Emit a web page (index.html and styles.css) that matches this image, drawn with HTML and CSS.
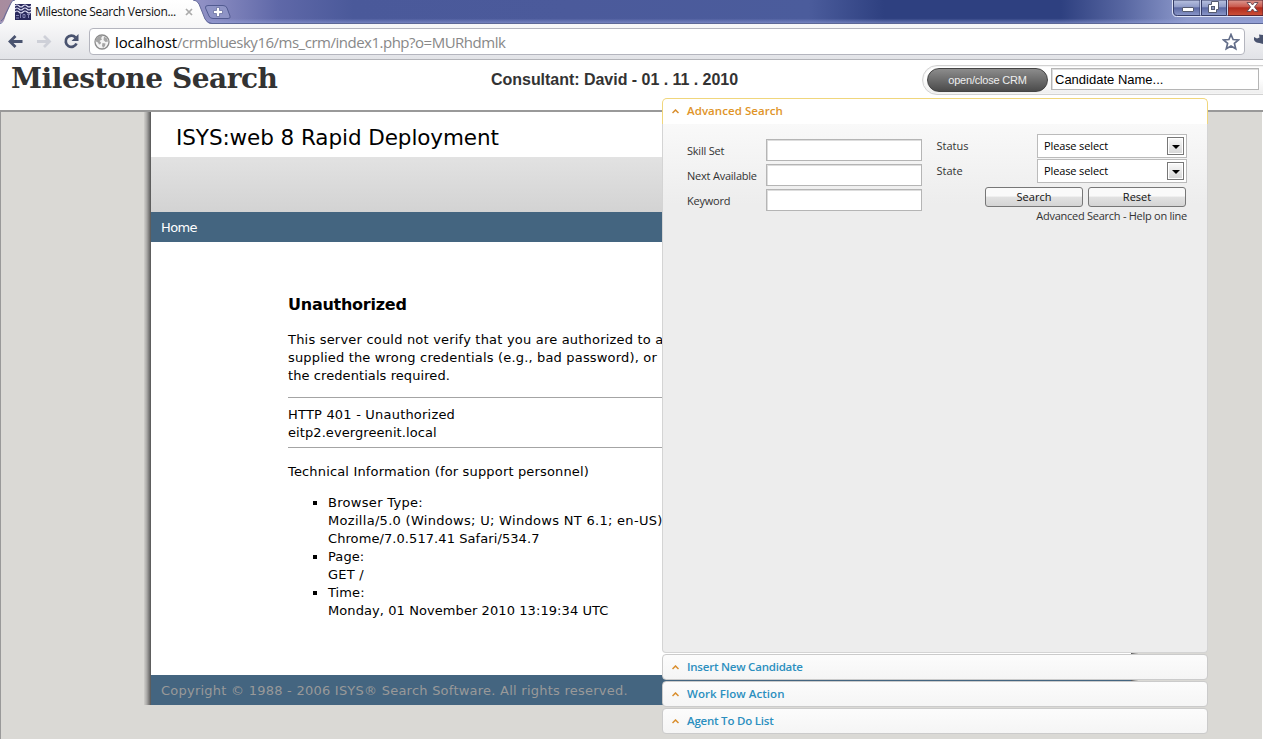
FILE: index.html
```
<!DOCTYPE html>
<html lang="en">
<head>
<meta charset="utf-8">
<title>Milestone Search</title>
<link rel="stylesheet" href="styles.css">
</head>
<body>
<div class="window">
  <div class="titlebar">
    <svg class="tabs" width="240" height="24" viewBox="0 0 240 24">
      <defs><linearGradient id="tab" x1="0" y1="0" x2="0" y2="1"><stop offset="0" stop-color="#fff"/><stop offset="1" stop-color="#f8f8f8"/></linearGradient></defs>
      <path d="M0 24C4 23 4 20 6 15L11 3Q12 0 15 0H193Q197 0 199 4L205 19Q207 24 212 24Z" fill="url(#tab)"/>
      <path d="M1 21C4 19 4 17 6 13L11 3Q12 0 15 0M193 0Q197 0 199 4L205 19Q207 23 212 23.500" fill="none" stroke="#626899" stroke-width="1"/>
      <path d="M205.500 8Q205 5.500 208 5.500H223Q226 5.500 227 8L230 16Q231 18.500 228 18.500H213Q210 18.500 209 16Z" fill="#8f94c6" stroke="#525b91"/>
      <path d="M216.500 7.500h3v3h3v3h-3v3h-3v-3h-3v-3h3z" fill="#fff" stroke="#6870a0" stroke-width=".8"/>
      <rect x="15" y="4" width="16" height="16" fill="#28285c"/>
      <path d="M15 6q2-2 4 0t4 0 4 0 4 0M15 9q2-2 4 0t4 0 4 0 4 0M15 12q2-2 4 0t4 0 4 0 4 0" fill="none" stroke="#dcdcf4" stroke-width="1.100"/>
      <path d="M16 15.500h3M20.500 14v4M23 14.500h2v3h-2zM27 14.500h3M28.500 14v4M16 18h3" fill="none" stroke="#8585b4"/>
      <path d="M186 9l6 6M192 9l-6 6" stroke="#aaa" stroke-width="1.700"/>
    </svg>
    <span class="tab-title">Milestone Search Version...</span>
    <svg class="controls" width="91" height="18" viewBox="0 0 91 18">
      <defs>
        <linearGradient id="btn" x1="0" y1="0" x2="0" y2="1"><stop offset="0" stop-color="#b9c2e0"/><stop offset=".45" stop-color="#8f9bc8"/><stop offset=".5" stop-color="#5b68a2"/><stop offset="1" stop-color="#8b98ca"/></linearGradient>
        <linearGradient id="close" x1="0" y1="0" x2="0" y2="1"><stop offset="0" stop-color="#dc9a92"/><stop offset=".45" stop-color="#c9564a"/><stop offset=".5" stop-color="#b02a1c"/><stop offset="1" stop-color="#cc5038"/></linearGradient>
      </defs>
      <path d="M.5 0v12q0 4.500 4 4.500H91" fill="none" stroke="#dfe4f7"/>
      <path d="M1.500 0v11q0 4.500 4 4.500H28V0z" fill="url(#btn)" stroke="#353c66"/>
      <path d="M29.500 0v15.500h25V0z" fill="url(#btn)" stroke="#353c66"/>
      <path d="M56 0v15.500h35V0z" fill="url(#close)" stroke="#5a2430"/>
      <path d="M28.500 0v15M55.500 0v15" stroke="#cdd4ee"/>
      <rect x="10.500" y="7.500" width="11" height="4" rx=".5" fill="#fff" stroke="#555b70"/>
      <path d="M39.500 1.500h7v8h-2v3h-8v-8h3z" fill="#fff" stroke="#555b70"/>
      <rect x="39.500" y="6.500" width="3" height="3" fill="#8d96bb" stroke="#555b70"/>
      <path d="M75 2.500h3.500l2 2.500 2-2.500H86L82.500 7 86 11.500h-3.500l-2-2.500-2 2.500H75L78.500 7z" fill="#fff" stroke="#62444f" stroke-width=".9"/>
    </svg>
  </div>
  <div class="toolbar">
    <svg class="nav" width="89" height="36" viewBox="0 0 89 36">
      <path d="M22.500 17.500H11M15.500 12l-5.500 5.500 5.500 5.500" fill="none" stroke="#49536f" stroke-width="2.800"/>
      <path d="M37 17.500h11.500M44 12l5.500 5.500-5.500 5.500" fill="none" stroke="#ced0d8" stroke-width="2.800"/>
      <path d="M75.500 13.500A5.600 5.600 0 1 0 76.500 19.500" fill="none" stroke="#49536f" stroke-width="2.700"/>
      <path d="M78.500 10v7h-7z" fill="#49536f"/>
    </svg>
    <div class="omnibox">
      <svg width="16" height="16" viewBox="0 0 16 16">
        <circle cx="8" cy="8" r="7" fill="#f4f4f4" stroke="#8b8b8b" stroke-width="1.300"/>
        <path d="M2 5q2-3 5-3.500l1.500 1L7 4l1 1.500L5.500 7 7 8.500 6.500 10 5 10.500 4 8.500 2 7.500zM10 2.500l3 2 1 3-2.500.5-2-2zM8.500 9l3 .5-.5 2.500-2 2-1-2.500z" fill="#a5a5a5"/>
      </svg>
      <span class="url"><b>localhost</b>/crmbluesky16/ms_crm/index1.php?o=MURhdmlk</span>
      <svg class="star" width="18" height="18" viewBox="0 0 18 18"><path d="M9 1.500l2.100 5 5.400.4-4.100 3.500 1.300 5.300L9 12.900l-4.700 2.800 1.300-5.300L1.500 6.900l5.400-.4z" fill="#fff" stroke="#626d89" stroke-width="1.700"/></svg>
    </div>
    <svg class="wrench" width="9" height="16" viewBox="0 0 9 16"><path d="M0 7l3 1.500L5.500 7.500 5 4.500 9 5v9L5.500 13Q1.500 13 0 10z" fill="#49536f"/></svg>
  </div>
  <header class="header">
    <h1 class="brand">Milestone Search</h1>
    <div class="consultant">Consultant: David - 01 . 11 . 2010</div>
    <div class="crm">
      <button class="toggle">open/close CRM</button>
      <div class="candidate">Candidate Name...</div>
    </div>
  </header>
  <main class="desk">
    <div class="shade"></div>
    <section class="site">
      <h2 class="site-title">ISYS:web 8 Rapid Deployment</h2>
      <div class="band"></div>
      <nav class="menu">Home</nav>
      <article class="error">
        <h3 class="error-title">Unauthorized</h3>
        <p class="para"><span class="wide">This server could not verify that you are authorized to access</span><br><span class="snug">supplied the wrong credentials (e.g., bad password), or</span><br>the credentials required.</p>
        <div class="status"><span class="wide">HTTP 401 - Unauthorized</span><br>eitp2.evergreenit.local</div>
        <p class="tech">Technical Information (for support personnel)</p>
        <ul class="info">
          <li><span class="wider">Browser Type:</span><br><span class="wider">Mozilla/5.0 (Windows; U; Windows NT 6.1; en-US)</span><br>Chrome/7.0.517.41 Safari/534.7</li>
          <li>Page:<br><span class="wide">GET /</span></li>
          <li>Time:<br>Monday, 01 November 2010 13:19:34 UTC</li>
        </ul>
      </article>
      <footer class="footer">Copyright © 1988 - 2006 ISYS® Search Software. All rights reserved.</footer>
    </section>
    <div class="shade shade-right"></div>
  </main>
  <aside class="accordion">
    <div class="tab open"><svg class="caret" width="7" height="5" viewBox="0 0 7 5"><path d="M.5 4L3.500 1l3 3" /></svg><span class="label loose">Advanced Search</span></div>
    <div class="panel">
      <div class="left">
        <label>Skill Set</label><i class="field"></i>
        <label>Next Available</label><i class="field"></i>
        <label>Keyword</label><i class="field"></i>
      </div>
      <div class="right">
        <div class="row"><label>Status</label><div class="select"><span>Please select</span><i class="drop"></i></div></div>
        <div class="row"><label>State</label><div class="select"><span>Please select</span><i class="drop"></i></div></div>
        <div class="buttons"><button class="button">Search</button><button class="button">Reset</button></div>
        <div class="help">Advanced Search - Help on line</div>
      </div>
    </div>
    <div class="tab"><svg class="caret" width="7" height="5" viewBox="0 0 7 5"><path d="M.5 4L3.500 1l3 3" /></svg><span class="label tight">Insert New Candidate</span></div>
    <div class="tab"><svg class="caret" width="7" height="5" viewBox="0 0 7 5"><path d="M.5 4L3.500 1l3 3" /></svg><span class="label loose">Work Flow Action</span></div>
    <div class="tab"><svg class="caret" width="7" height="5" viewBox="0 0 7 5"><path d="M.5 4L3.500 1l3 3" /></svg><span class="label tight">Agent To Do List</span></div>
  </aside>
</div>
</body>
</html>
```
FILE: styles.css
```
* { box-sizing: border-box; }
body { margin: 0; }
h1, h2, h3, p, ul { margin: 0; padding: 0; }
button { padding: 0; }
.window { position: relative; display: flex; flex-direction: column; width: 1263px; height: 739px; overflow: hidden; background: #fff; }

.titlebar { position: relative; display: flex; justify-content: space-between; height: 24px; flex: none; background: linear-gradient(#0000 80%, #98a4de88), linear-gradient(90deg, #a88c9e 0, #8f90c4 16%, #5f68a8 22%, #4a599a 28%, #4b5a9b 45%, #4b5c9c 64%, #2e4080 70%, #2e4080 84%, #5867a2 89%, #8d99cb 94%); border-bottom: 1px solid #5c6796; }
.tabs { flex: none; }
.tab-title { position: absolute; left: 35px; top: 4px; font: 12px/16px "Open Sans", sans-serif; letter-spacing: -.37px; white-space: nowrap; color: #111; }
.controls { flex: none; }
.toolbar { display: flex; height: 36px; flex: none; background: linear-gradient(#f8f8f9, #e2e3e7); border-bottom: 1px solid #b3b4b9; }
.nav { flex: none; }
.omnibox { display: flex; flex: none; align-items: center; width: 1156px; height: 27px; margin-top: 4px; padding: 0 4px 0 4px; border: 1px solid #b4b5be; border-radius: 4px; background: #fff; }
.url { margin-left: 5px; flex: 1; font: 15px/22px "Open Sans", sans-serif; letter-spacing: -.49px; color: #888; white-space: nowrap; }
.url b { font-weight: 400; color: #000; letter-spacing: -.1px; }
.wrench { flex: none; margin: 6px 0 0 9px; }

.header { display: flex; height: 52px; flex: none; background: #fff; border-bottom: 2px solid #999; }
.brand { flex: none; width: 480px; padding-left: 11px; font: bold 28px/37px "DejaVu Serif", serif; letter-spacing: -.45px; color: #333; white-space: nowrap; }
.consultant { flex: none; width: 442px; padding-left: 11px; font: bold 16px/39px "Liberation Sans", Arial, sans-serif; letter-spacing: -.03px; color: #333; white-space: nowrap; }
.crm { display: flex; flex: none; width: 360px; height: 30px; margin-top: 5px; padding: 2px 0 0 4px; border: 1px solid #d2d2d2; border-radius: 15px 0 0 15px; background: linear-gradient(#fff 45%, #eee); box-shadow: inset 0 0 0 1px #f4f4f4; }
.toggle { flex: none; width: 121px; height: 24px; border: 1px solid #444; border-radius: 12px; background: linear-gradient(#8c8c8c, #4b4b4b); color: #eee; font: 11px/20px "Liberation Sans", Arial, sans-serif; letter-spacing: -.2px; }
.candidate { flex: none; width: 208px; height: 22px; margin: 0 0 0 3px; padding-left: 3px; border: 1px solid #b5b5b5; box-shadow: inset 1px 1px 0 #ddd; background: #fff; font: 13px/21px "Liberation Sans", Arial, sans-serif; color: #000; }

.desk { display: flex; flex: 1; align-items: flex-start; background: #dad9d5; border-left: 1px solid #999; border-right: 1px solid #fff; padding-left: 143px; }
.shade { width: 7px; height: 593px; background: linear-gradient(90deg, #d0cfcb, #aaa9a7 40%, #545454); }
.shade-right { transform: scaleX(-1); }
.site { display: flex; flex-direction: column; width: 980px; height: 593px; background: #fff; font-family: "DejaVu Sans", Verdana, sans-serif; color: #000; }
.site-title { height: 45px; padding-left: 25px; font-weight: 400; font-size: 21.5px; line-height: 51px; letter-spacing: -.08px; }
.band { height: 55px; background: linear-gradient(#e2e2e2, #d3d3d3); }
.menu { height: 30px; padding-left: 10px; background: #446580; color: #fff; font-size: 13px; line-height: 31px; letter-spacing: -.6px; }
.error { flex: 1; padding: 53px 0 0 137px; font-size: 13px; line-height: 18px; letter-spacing: .08px; white-space: nowrap; }
.error-title { font-size: 16px; line-height: 20px; letter-spacing: -.25px; }
.wide { letter-spacing: .2px; }
.wider { letter-spacing: .3px; }
.snug { letter-spacing: .17px; }
.para { margin-top: 16px; }
.status { width: 700px; margin-top: 12px; padding: 8px 0 5px; border-top: 1px solid #a4a4a4; border-bottom: 1px solid #a4a4a4; }
.tech { margin-top: 15px; letter-spacing: .16px; }
.info { margin-top: 13px; padding-left: 40px; list-style: square; }
.footer { height: 30px; padding-left: 10px; background: #446580; color: #999; font-size: 13px; line-height: 31px; letter-spacing: .24px; }

.accordion { position: absolute; left: 662px; top: 98px; width: 546px; display: flex; flex-direction: column; font-family: "Open Sans", "Trebuchet MS", sans-serif; }
.tab { display: flex; align-items: center; height: 26px; margin-top: 1px; padding-left: 9px; border: 1px solid #cbcbcb; border-radius: 4px; background: linear-gradient(#fcfcfc, #f5f5f5); color: #2b8fbf; font-size: 11.5px; font-weight: 600; white-space: nowrap; }
.label { padding-bottom: 2px; }
.loose { letter-spacing: .06px; }
.tight { letter-spacing: -.22px; }
.tab.open { margin-top: 0; border-color: #f0d67c; border-bottom: 0; border-radius: 5px 5px 0 0; background: #fff; color: #e09428; }
.caret { flex: none; margin-right: 8px; }
.caret path { fill: none; stroke: #d98e2d; stroke-width: 1.500; }
.panel { display: flex; height: 529px; padding: 10px 20px 0 24px; border: 1px solid #d4d4d4; border-top: 0; border-radius: 0 0 4px 4px; background: linear-gradient(#f9f9f9, #ededed 80px); color: #333; font-size: 11px; }
.left { display: grid; grid-template-columns: 79px 156px; grid-template-rows: repeat(3, 22px); row-gap: 3px; padding-top: 5px; height: 77px; width: 250px; line-height: 24px; letter-spacing: -.22px; white-space: nowrap; }
.field { background: #fff; border: 1px solid #b5b5b5; box-shadow: inset 1px 1px 0 #ddd; }
.right { width: 251px; }
.row { display: flex; justify-content: space-between; height: 24px; margin-bottom: 1px; line-height: 24px; }
.select { display: flex; justify-content: space-between; width: 150px; height: 24px; padding: 2px 2px 2px 6px; border: 1px solid #bbb; background: #fff; color: #000; line-height: 18px; letter-spacing: -.12px; }
.drop { position: relative; width: 17px; height: 18px; border: 1px solid #777; background: linear-gradient(#fafafa, #d5d5d5); box-shadow: inset 0 0 0 1px #fff; }
.drop::after { content: ""; position: absolute; left: 4px; top: 7px; border: 4px solid transparent; border-width: 4px 4px 0; border-top-color: #000; }
.buttons { display: flex; justify-content: flex-end; gap: 5px; padding: 3px 1px 0 0; }
.button { width: 98px; height: 20px; border: 1px solid #777; border-radius: 3px; background: linear-gradient(#fafafa 45%, #e2e2e2 50%, #d4d4d4); font: 11px/18px "Open Sans", sans-serif; color: #111; }
.help { text-align: right; line-height: 18px; letter-spacing: -.26px; white-space: nowrap; }
```
